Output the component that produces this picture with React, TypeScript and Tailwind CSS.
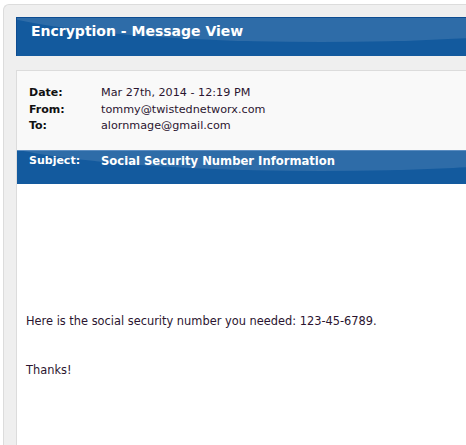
import React from "react";

const font = { fontFamily: "'DejaVu Sans', Verdana, sans-serif" };

const MetaRow = ({ label, value }: { label: string; value: string }) => (
  <div className="flex">
    <span className="w-[72px] font-bold text-[#111]">{label}</span>
    <span className="text-[11.2px] text-[#2b1530]">{value}</span>
  </div>
);

export default function App() {
  return (
    <div
      className="w-[466px] h-[445px] overflow-hidden bg-white pt-[4px] pl-[3px]"
      style={font}
    >
      <div className="h-full rounded-tl-[6px] border-t border-l border-[#dcdcdc] bg-[#efefef] pt-[12px] pl-[12px]">
        <div className="relative h-[39px] overflow-hidden border-t border-l border-[#0d4c91] bg-[#135a9e]">
          <div className="absolute left-[-40px] right-[-200px] top-[-60px] h-[84px] rounded-b-[50%] bg-[#2e6ca8]" />
          <div className="relative pl-[14px] pt-[3px] text-[14px] font-bold leading-[20px] text-white">
            Encryption - Message View
          </div>
        </div>

        <div className="mt-[14px] h-full border-t border-l border-[#dcdcdc] bg-white">
          <div className="bg-[#f9f9f9] pl-[12px] pt-[14px] pb-[15px] text-[11px] leading-[16.5px]">
            <MetaRow label="Date:" value="Mar 27th, 2014 - 12:19 PM" />
            <MetaRow label="From:" value="tommy@twistednetworx.com" />
            <MetaRow label="To:" value="alornmage@gmail.com" />
          </div>

          <div className="relative h-[34px] overflow-hidden border-t border-[#5a8cc0] bg-[#135a9e]">
            <div className="absolute left-[-40px] right-[-200px] top-[-60px] h-[80px] rounded-b-[50%] bg-[#2e6ca8]" />
            <div className="relative flex pl-[12px] pt-[2px] text-[11px] font-bold leading-[16px] text-white">
              <span className="w-[72px]">Subject:</span>
              <span className="text-[11.6px]">Social Security Number Information</span>
            </div>
          </div>

          <div className="pl-[9px] pt-[129px] text-[11.4px] leading-[16px] text-[#2b1530]">
            <p>Here is the social security number you needed: 123-45-6789.</p>
            <p className="mt-[33px]">Thanks!</p>
          </div>
        </div>
      </div>
    </div>
  );
}
